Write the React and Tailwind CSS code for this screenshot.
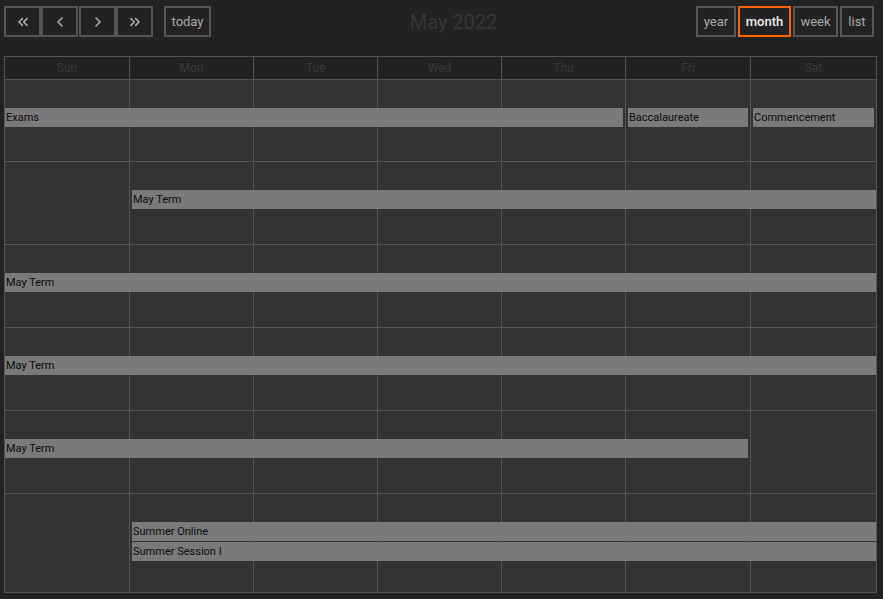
import { ChevronsLeft, ChevronLeft, ChevronRight, ChevronsRight } from 'lucide-react';

const days = ['Sun', 'Mon', 'Tue', 'Wed', 'Thu', 'Fri', 'Sat'];

const colStart = ['col-start-1', 'col-start-2', 'col-start-3', 'col-start-4', 'col-start-5', 'col-start-6', 'col-start-7'];
const colEnd = ['col-end-1', 'col-end-2', 'col-end-3', 'col-end-4', 'col-end-5', 'col-end-6', 'col-end-7', 'col-end-8'];
const rowStart = ['row-start-1', 'row-start-2', 'row-start-3', 'row-start-4'];

// start/end are 0-based day indexes (end inclusive); isStart/isEnd tell if the event begins/ends in this week
const weeks = [
  {
    height: 'h-[82px]',
    events: [
      { title: 'Exams', start: 0, end: 4, row: 0, isStart: false, isEnd: true },
      { title: 'Baccalaureate', start: 5, end: 5, row: 0, isStart: true, isEnd: true },
      { title: 'Commencement', start: 6, end: 6, row: 0, isStart: true, isEnd: true },
    ],
  },
  { height: 'h-[83px]', events: [{ title: 'May Term', start: 1, end: 6, row: 0, isStart: true, isEnd: false }] },
  { height: 'h-[83px]', events: [{ title: 'May Term', start: 0, end: 6, row: 0, isStart: false, isEnd: false }] },
  { height: 'h-[83px]', events: [{ title: 'May Term', start: 0, end: 6, row: 0, isStart: false, isEnd: false }] },
  { height: 'h-[83px]', events: [{ title: 'May Term', start: 0, end: 5, row: 0, isStart: false, isEnd: true }] },
  {
    height: 'h-[99px]',
    events: [
      { title: 'Summer Online', start: 1, end: 6, row: 0, isStart: true, isEnd: false },
      { title: 'Summer Session I', start: 1, end: 6, row: 1, isStart: true, isEnd: false },
    ],
  },
];

const cols = 'grid-cols-[125px_124px_124px_124px_124px_125px_1fr]';

const NavButton = ({ children }) => (
  <button className="w-[37px] h-[31px] flex items-center justify-center border-2 border-[#555] bg-[#222] text-[#aaa]">
    {children}
  </button>
);

const ViewButton = ({ label, active, width }) => (
  <button
    className={`${width} h-[31px] flex items-center justify-center border-2 text-[13px] ${
      active ? 'border-[#f60] text-[#eee] font-medium' : 'border-[#555] text-[#aaa]'
    } bg-[#222]`}
  >
    {label}
  </button>
);

const Week = ({ week }) => (
  <div className={`grid ${cols} grid-rows-[28px_20px_20px_1fr] ${week.height}`}>
    {days.map((d, i) => (
      <div key={d} className={`${colStart[i]} row-span-full border-r border-b border-[#555] bg-[#333]`} />
    ))}
    {week.events.map((ev, i) => (
      <div
        key={i}
        className={`${colStart[ev.start]} ${colEnd[ev.end + 1]} ${rowStart[ev.row + 1]} h-[19px] bg-[#7a7a7a] text-[#0a0a0a] text-[11px] leading-[19px] pl-px truncate z-10 ${
          ev.isStart ? 'ml-[2px]' : 'ml-0'
        } ${ev.isEnd ? 'mr-[3px]' : 'mr-px'}`}
      >
        {ev.title}
      </div>
    ))}
  </div>
);

export default function App() {
  return (
    <div className="min-h-screen w-full bg-[#222] pt-[6px] pl-[4px]" style={{ fontFamily: 'Roboto, "Noto Sans", sans-serif' }}>
      {/* Toolbar */}
      <div className="w-[873px] flex items-center justify-between">
        <div className="flex items-center">
          <div className="flex">
            <NavButton><ChevronsLeft size={16} strokeWidth={2.5} /></NavButton>
            <NavButton><ChevronLeft size={16} strokeWidth={2.5} /></NavButton>
          </div>
          <div className="flex ml-px">
            <NavButton><ChevronRight size={16} strokeWidth={2.5} /></NavButton>
            <NavButton><ChevronsRight size={16} strokeWidth={2.5} /></NavButton>
          </div>
          <button className="ml-[11px] w-[47px] h-[31px] flex items-center justify-center border-2 border-[#555] text-[13px] text-[#aaa] bg-[#222]">
            today
          </button>
        </div>
        <h2 className="text-[20px] text-[#373737]">May 2022</h2>
        <div className="flex items-center gap-[2px] pr-[3px]">
          <ViewButton label="year" width="w-[40px]" />
          <ViewButton label="month" width="w-[53px]" active />
          <ViewButton label="week" width="w-[45px]" />
          <ViewButton label="list" width="w-[34px]" />
        </div>
      </div>

      {/* Calendar */}
      <div className="mt-[19px] w-[873px] border-l border-t border-[#555]">
        <div className={`grid ${cols} h-[23px]`}>
          {days.map((d) => (
            <div key={d} className="border-r border-b border-[#555] bg-[#222] text-[12px] text-[#3a3a3a] flex items-center justify-center">
              {d}
            </div>
          ))}
        </div>
        {weeks.map((w, i) => (
          <Week key={i} week={w} />
        ))}
      </div>
    </div>
  );
}
